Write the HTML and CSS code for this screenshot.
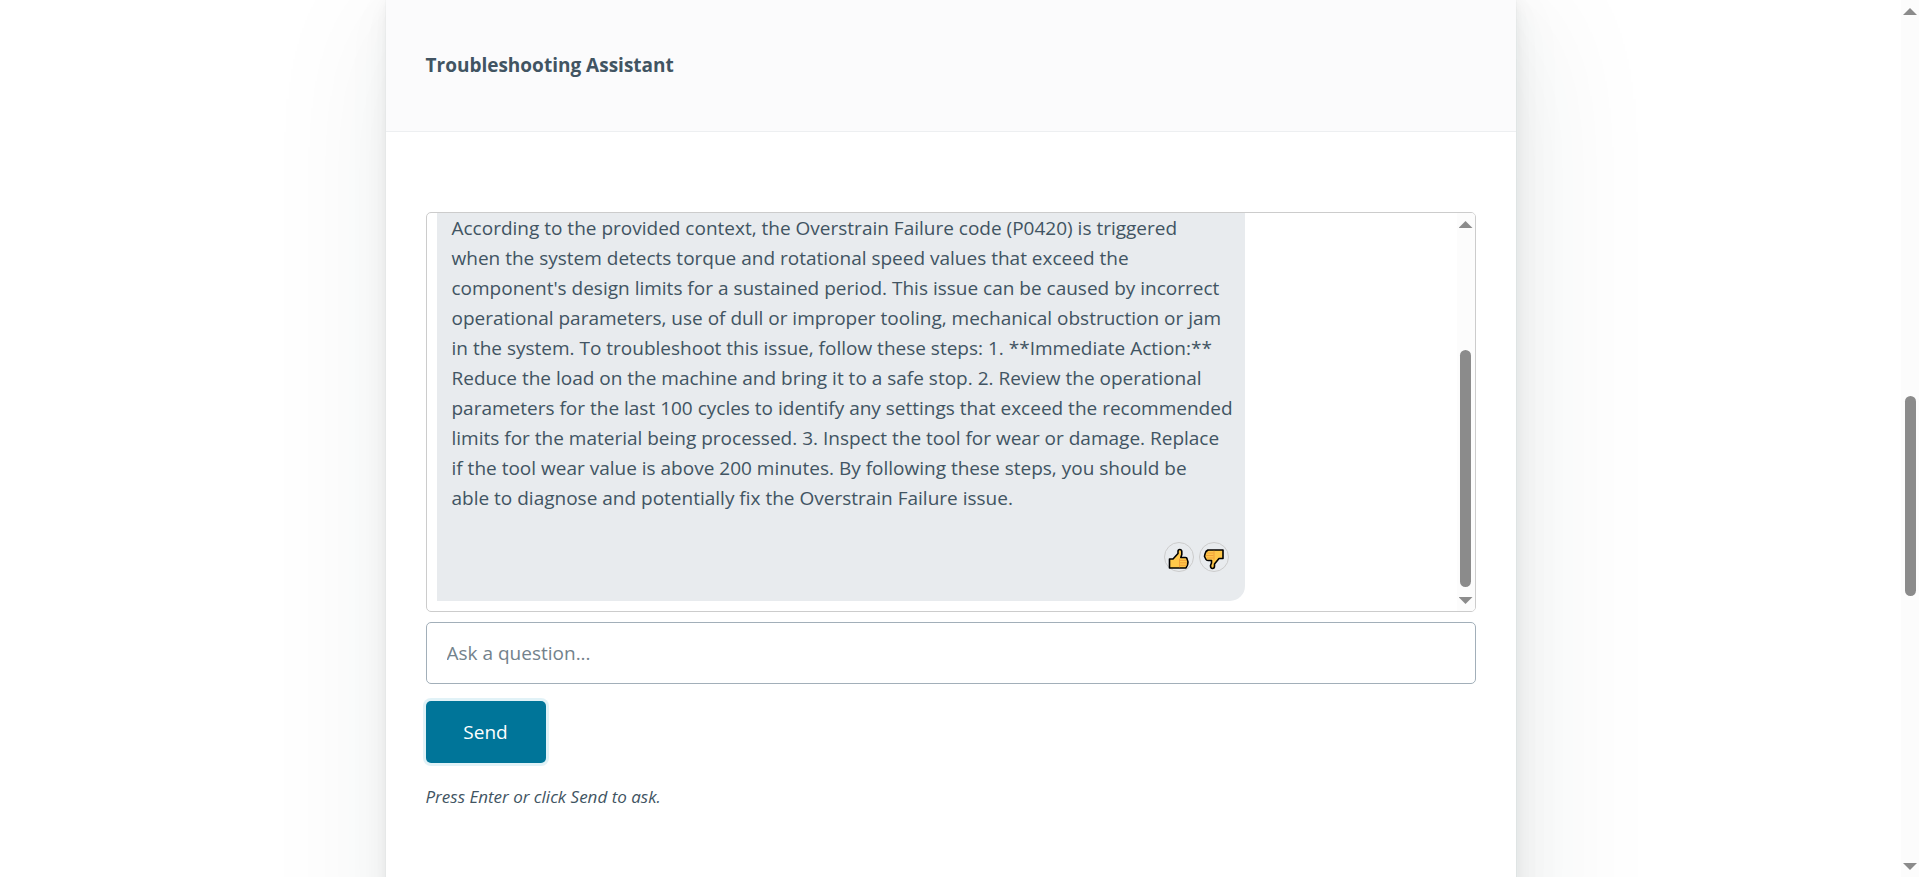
FILE: index.html
```html
<!DOCTYPE html>
<html lang="en">
<head>
<meta charset="utf-8">
<meta name="viewport" content="width=device-width, initial-scale=1">
<title>Troubleshooting Assistant</title>
<link rel="stylesheet" href="styles.css">
</head>
<body>
<div class="page">
  <main class="container">
    <article class="card">
      <header class="card-header"><strong>Troubleshooting Assistant</strong></header>
      <div class="chat">
        <div class="messages">
          <div class="bubble">
            <p class="answer">According to the provided context, the Overstrain Failure code (P0420) is triggered<br>when the system detects torque and rotational speed values that exceed the<br>component's design limits for a sustained period. This issue can be caused by incorrect<br>operational parameters, use of dull or improper tooling, mechanical obstruction or jam<br>in the system. To troubleshoot this issue, follow these steps: 1. **Immediate Action:**<br>Reduce the load on the machine and bring it to a safe stop. 2. Review the operational<br>parameters for the last 100 cycles to identify any settings that exceed the recommended<br>limits for the material being processed. 3. Inspect the tool for wear or damage. Replace<br>if the tool wear value is above 200 minutes. By following these steps, you should be<br>able to diagnose and potentially fix the Overstrain Failure issue.</p>
            <div class="feedback">
              <button class="vote" type="button" aria-label="Helpful">
                <svg viewBox="0 0 30 30" aria-hidden="true">
                  <path d="M5.500 17H9l5-5.500V9.500Q14 7.500 15.800 7.500T17.800 9.500V12.500L16.800 15.500H21.500Q23 15.500 23 17L24 20 23.500 23 22 26H5.500z" fill="#ffc84a" stroke="#000" stroke-width="1.600" stroke-linejoin="round"/>
                  <path d="M16 18.300h6.500M16 20.800h7M16 23.300h6.500M15.500 16.500v8.700" fill="none" stroke="#f2a03a" stroke-width="1"/>
                </svg>
              </button>
              <button class="vote" type="button" aria-label="Not helpful">
                <svg viewBox="0 0 30 30" aria-hidden="true">
                  <path d="M24 8H9L7 9.500 6 12 5.500 14.500 7 17.500Q7.500 18.500 9 18.500H12.500V21L11.500 23.500Q11.500 26.500 13.500 26.500T15.500 24V22L20 16.500H24z" fill="#ffc84a" stroke="#000" stroke-width="1.600" stroke-linejoin="round"/>
                  <path d="M8 11h6.500M6.800 13.500h7.700M8 16h6.500M15 8.800v9" fill="none" stroke="#f2a03a" stroke-width="1"/>
                </svg>
              </button>
            </div>
          </div>
        </div>
        <div class="scrollbar" aria-hidden="true">
          <span class="arrow arrow-up"></span>
          <div class="track"><div class="thumb chat-thumb"></div></div>
          <span class="arrow arrow-down"></span>
        </div>
      </div>
      <form class="ask">
        <input class="question" type="text" placeholder="Ask a question..." aria-label="Ask a question">
        <button class="send" type="button">Send</button>
      </form>
      <small class="hint"><em>Press Enter or click Send to ask.</em></small>
    </article>
  </main>
  <div class="scrollbar" aria-hidden="true">
    <span class="arrow arrow-up"></span>
    <div class="track"><div class="thumb page-thumb"></div></div>
    <span class="arrow arrow-down"></span>
  </div>
</div>
</body>
</html>
```
FILE: styles.css
```css
* { box-sizing: border-box; }

body {
  margin: 0;
  background: #fff;
  color: #415462;
  font-family: "Segoe UI", "Open Sans", "Noto Sans", sans-serif;
  font-size: 19px;
  line-height: 30px;
}

button, input { font: inherit; }

.page {
  display: flex;
  height: 100vh;
  overflow: hidden;
}

.container {
  flex: 1;
  min-width: 0;
  overflow: hidden;
}

.card {
  max-width: 1130px;
  min-height: calc(100vh + 120px);
  margin: 0 auto;
  padding: 0 40px 80px;
  background: #fff;
  box-shadow:
    0 1px 3px rgba(27, 50, 50, 0.017),
    1px 1px 8px rgba(27, 50, 50, 0.024),
    1px 3px 15px rgba(27, 50, 50, 0.03),
    2px 5px 27px rgba(27, 50, 50, 0.036),
    4px 8px 50px rgba(27, 50, 50, 0.045),
    10px 20px 130px rgba(27, 50, 50, 0.08),
    0 0 0 1px rgba(27, 40, 50, 0.015);
}

.card-header {
  margin: 0 -40px 80px;
  padding: 50px 40px 51px;
  border-bottom: 1px solid #edeff1;
  background: #fbfbfc;
}

.chat {
  display: flex;
  height: 400px;
  border: 1px solid #ccc;
  border-radius: 5px;
  overflow: hidden;
}

.messages {
  display: flex;
  flex: 1;
  flex-direction: column;
  justify-content: flex-end;
  min-width: 0;
  padding: 10px;
}

.bubble {
  width: 80%;
  padding: 15px 16px 29px 15px;
  border-radius: 15px 15px 15px 0;
  background: #e8ebee;
}

.answer {
  margin: 0 -10px 29px 0;
}

.feedback {
  display: flex;
  justify-content: flex-end;
  gap: 5px;
}

.vote {
  width: 30px;
  height: 30px;
  padding: 0;
  border: 1px solid #ccc;
  border-radius: 50%;
  background: transparent;
}

.vote svg {
  display: block;
  width: 30px;
  height: 30px;
  margin: -1px;
}

.scrollbar {
  display: flex;
  flex: none;
  flex-direction: column;
  align-items: center;
  width: 18px;
  padding: 8px 0 7px;
  background: #fcfcfc;
}

.arrow {
  width: 14px;
  height: 7px;
  background: #8b8b8b;
}

.arrow-up { clip-path: polygon(50% 0, 100% 100%, 0 100%); }
.arrow-down { clip-path: polygon(0 0, 100% 0, 50% 100%); }

.track {
  flex: 1;
  width: 11px;
  margin: 3px 0 7px;
}

.thumb {
  width: 11px;
  border-radius: 6px;
  background: #8b8b8b;
}

.chat-thumb {
  height: 66%;
  margin-top: 119px;
}

.page-thumb {
  height: 200px;
  margin-top: 378px;
}

.ask { margin-top: 10px; }

.question {
  display: block;
  width: 100%;
  height: 62px;
  padding: 15px 20px;
  border: 1px solid #a2afb9;
  border-radius: 5px;
  background: #fff;
  color: #415462;
}

.question::placeholder {
  color: #73828c;
  opacity: 1;
}

.send {
  display: block;
  width: 120px;
  height: 62px;
  margin-top: 17px;
  border: 0;
  border-radius: 5px;
  background: #007599;
  box-shadow: 0 0 0 3px rgba(16, 149, 193, 0.125);
  color: #fff;
}

.hint {
  display: block;
  margin-top: 19px;
  font-size: 17px;
}
```
